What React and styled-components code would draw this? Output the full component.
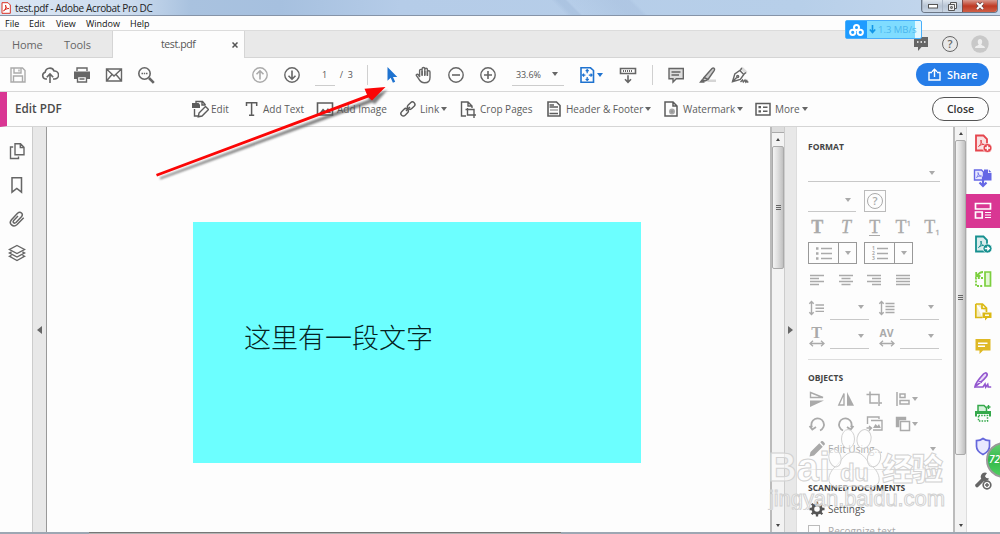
import React from "react";
import styled, { createGlobalStyle } from "styled-components";

const Svg = ({ w = 18, h = w, children }) => (
  <IconSvg width={w} height={h} viewBox={`0 0 ${w} ${h}`}>
    {children}
  </IconSvg>
);

const icons = {
  save: (
    <Svg>
      <path d="M2 2h11.5L16 4.5V16H2zM5 2v5h7V2M4.5 16v-6h9v6M10 3.5v2" />
    </Svg>
  ),
  cloud: (
    <Svg>
      <path d="M6 13H4.6A3.5 3.5 0 0 1 4.2 6.2 4.6 4.6 0 0 1 13 5a4 4 0 0 1 1 8h-2M9 17V8.5M5.8 11.3 9 8l3.2 3.3" strokeWidth="1.6" />
    </Svg>
  ),
  print: (
    <Svg>
      <path d="M4 5V2h10v3" />
      <path d="M1 5.5h16V13h-3v-3H4v3H1z" fill="currentColor" stroke="none" />
      <path d="M4.5 10.5h9v5.5h-9zM6.5 13h5" />
    </Svg>
  ),
  mail: (
    <Svg>
      <path d="M1.5 3h15v12h-15zM1.5 3 9 10l7.5-7M1.5 15l5.5-6.5M16.5 15 11 8.5" />
    </Svg>
  ),
  search: (
    <Svg>
      <circle cx="7.5" cy="7.5" r="5.7" strokeWidth="1.6" />
      <path d="m12 12 4.8 4.8" strokeWidth="2.6" />
      <path d="M4.5 7.5H6m.8 0h1.4m.8 0h1.5" strokeWidth="1.5" />
    </Svg>
  ),
  up: (
    <Svg>
      <circle cx="9" cy="9" r="7.2" />
      <path d="M9 13.5V5M5.5 8.3 9 4.8l3.5 3.5" strokeWidth="1.6" />
    </Svg>
  ),
  down: (
    <Svg>
      <circle cx="9" cy="9" r="7.2" />
      <path d="M9 4.5V13M5.5 9.7 9 13.2l3.5-3.5" strokeWidth="1.6" />
    </Svg>
  ),
  pointer: (
    <Svg>
      <path d="M4.5 1v13.8l3.2-3 2.2 5 2.3-1-2.2-4.8h4.3z" fill="currentColor" stroke="none" />
    </Svg>
  ),
  hand: (
    <Svg>
      <path d="M4.6 11V4.6c0-1.6 2.5-1.6 2.5 0V9 2.8c0-1.8 2.7-1.8 2.7 0V9 3.5c0-1.7 2.6-1.7 2.6 0V9.5 6c0-1.7 2.6-1.6 2.6 0v5.5c0 3-1.8 5.3-5.4 5.3-3.3 0-4.8-1.9-6.2-4.5L1.3 9.5c-.4-1 1.2-1.9 2.1-.8z" />
      <path d="M7.1 5v5M9.800 5v5M12.400 5v5" />
    </Svg>
  ),
  minus: (
    <Svg>
      <circle cx="9" cy="9" r="7.2" />
      <path d="M5 9h8" strokeWidth="1.6" />
    </Svg>
  ),
  plus: (
    <Svg>
      <circle cx="9" cy="9" r="7.2" />
      <path d="M5 9h8M9 5v8" strokeWidth="1.6" />
    </Svg>
  ),
  fit: (
    <Svg>
      <path d="M2 1.8h9.500L14.500 4.500v11.700H2z" strokeWidth="1.600" />
      <path d="M8.200 3.700v3.500M6.700 5.200l1.500-1.500 1.500 1.500M8.200 14.500V11M6.700 13l1.500 1.500L9.700 13M3.400 9.100h3M5 7.600 3.500 9.100 5 10.600M13.200 9.100h-3.400M11.600 7.600l1.500 1.500-1.500 1.500" strokeWidth="1.200" />
    </Svg>
  ),
  measure: (
    <Svg>
      <path d="M1.500 2.500h15v5h-15z" strokeWidth="1.600" />
      <path d="M9 9.300v7M6 13.300l3 3 3-3" strokeWidth="1.600" />
      <path d="M4 5h10" strokeDasharray="1 1" strokeWidth="2" />
    </Svg>
  ),
  comment: (
    <Svg>
      <path d="M2 2.500h14.300v10.300h-7L6 16v-3.200H2z" fill="#ddd" />
      <path d="M4.500 6h9M4.500 9h7.500" />
    </Svg>
  ),
  marker: (
    <Svg>
      <path d="M8 16h9v-2.500H10z" fill="#d5d5d5" stroke="none" />
      <path d="m5 11.500 8-9c1.500-1.400 3.300.1 2.300 1.800L9 13.500zM5 11.500l-1 1.500v1.500l2.800.3L9 13.500M3.500 13.500 1.500 16h4" fill="#ccc" />
    </Svg>
  ),
  sign: (
    <Svg>
      <path d="M9 2.500 11.500.8l5 5-1.800 2.500z" fill="#ddd" stroke="none" />
      <path d="M1.500 15.700 3.800 8l5-3.500 4 4-3.500 5zM9 5l1.800-3.200M12.500 8.500l2.500-2M1.700 15.500l4-4" />
      <circle cx="6.700" cy="10.500" r="1" />
      <path d="M9.500 16l2-2 .8 2 1.700-2 .8 2 1-1.300.6 1.300h1" />
    </Svg>
  ),
  editPdf: (
    <Svg>
      <path d="M5 3.500V1.500h6.500L14.500 5M3.500 9v7H8M11 1.500V5h3.500" />
      <path d="M1 3h6.500l1.500 1.500V8H1z" fill="currentColor" stroke="none" />
      <path d="m8 13 6.500-6.500 3 3-6.500 6.500-3.700.8z" fill="#fdfdfd" />
    </Svg>
  ),
  text: (
    <Svg>
      <path d="M4.500 6V2.800h10.200V6M9.600 3v12.500M7 15.300h5.200" strokeWidth="1.500" />
    </Svg>
  ),
  image: (
    <Svg>
      <path d="M1.500 3h15v12h-15z" strokeWidth="1.600" />
      <path d="m3.500 13 3.500-4.500 2.500 2.500 2.500-3 3 5z" fill="currentColor" stroke="none" />
    </Svg>
  ),
  link: (
    <Svg>
      <rect x="-4.200" y="-2.500" width="8.400" height="5" rx="2.500" transform="translate(5.600 12.200) rotate(-45)" />
      <rect x="-4.200" y="-2.500" width="8.400" height="5" rx="2.500" transform="translate(12.200 5.600) rotate(-45)" />
      <path d="m7 11 4-4" />
    </Svg>
  ),
  cropPages: (
    <Svg>
      <path d="M7 16H2.500V2H9l4 4v2M9 2v4h4M8.500 8v7H17M6.500 9.500H15V18" />
    </Svg>
  ),
  header: (
    <Svg>
      <path d="M3 2h8.500L15 5.500V16H3z" strokeWidth="1.600" />
      <path d="M4.500 5H9M4.500 7h8.500M4.500 13.500H13" />
      <path d="M5 10h8" stroke="#bbb" strokeWidth="2" />
    </Svg>
  ),
  watermark: (
    <Svg>
      <path d="M3 2h8l4 4v10H3zM11 2v4h4" strokeWidth="1.500" />
      <circle cx="10" cy="11.500" r="2.300" fill="#999" stroke="#aaa" />
    </Svg>
  ),
  more: (
    <Svg>
      <path d="M2 3.500h14v11.500H2z" strokeWidth="1.500" />
      <path d="M4.500 7.200H7M4.500 11.300H7" strokeWidth="2.300" />
      <path d="M9 7.200h4.500M9 11.300h4.500" strokeWidth="1.500" />
    </Svg>
  ),
  pages: (
    <Svg>
      <path d="M7 1.700h5.500L16 5.200v7.600H7zM12.300 1.700v3.800H16M5.200 5H2.500v11.500h8v-2" />
    </Svg>
  ),
  bookmark: (
    <Svg>
      <path d="M4 1.700h9.500v14.500L8.800 12.500 4 16.200z" strokeWidth="1.500" />
    </Svg>
  ),
  clip: (
    <Svg>
      <path d="m15.700 7.700-6.600 6.800c-3.900 3.500-9-.8-5.600-4.800l6-6.400c3-2.600 6.300.6 3.900 3.500l-5.400 5.700c-1.900 1.500-3.700-.3-2.300-2.100L10 6" strokeWidth="1.500" />
    </Svg>
  ),
  layers: (
    <Svg>
      <path d="m9 1.500 7.500 4-7.500 4-7.500-4zM3.500 8l-2 1L9 13l7.500-4-2-1M3.500 11.300l-2 1L9 16.500l7.500-4.200-2-1" />
    </Svg>
  ),
  alignLeft: <Svg><path d="M2 4.500h14M2 7.500h9M2 10.500h14M2 13.500h9" /></Svg>,
  alignCenter: <Svg><path d="M2 4.500h14M4.500 7.500h9M2 10.500h14M4.500 13.500h9" /></Svg>,
  alignRight: <Svg><path d="M2 4.500h14M7 7.500h9M2 10.500h14M7 13.500h9" /></Svg>,
  justify: <Svg><path d="M2 4.500h14M2 7.500h14M2 10.500h14M2 13.500h14" /></Svg>,
  lineSpace: (
    <Svg>
      <path d="M3.500 3v12M1.300 4.800 3.500 2.500l2.200 2.300M1.300 13.200l2.200 2.300 2.200-2.300M7.500 6H16M7.500 9.200H16M7.500 12.400H16" />
    </Svg>
  ),
  paraSpace: (
    <Svg>
      <path d="M3.500 3v12M1.300 4.800 3.500 2.500l2.200 2.300M1.300 13.200l2.200 2.300 2.200-2.300M7.500 4.500H16.500M7.500 7.500H16.500M7.500 10.500H16.500M7.500 13.500H16.500" />
    </Svg>
  ),
  flipV: (
    <Svg>
      <path d="M2.500 2.500 15 7.500H2.500z" />
      <path d="M2 10.500h14L2 17z" fill="currentColor" stroke="none" />
    </Svg>
  ),
  flipH: (
    <Svg>
      <path d="M7 3.500V15H1.800z" />
      <path d="M10 2v13.700h7z" fill="currentColor" stroke="none" />
    </Svg>
  ),
  crop: (
    <Svg>
      <path d="M5 1.500V13h8M1.500 4.500H14V16M14.500 13H17" strokeWidth="1.500" />
    </Svg>
  ),
  alignObj: (
    <Svg>
      <path d="M3 2v14M6 4h5v3.500H6zM6 10.500h9V14H6z" strokeWidth="1.500" />
    </Svg>
  ),
  ccw: (
    <Svg>
      <path d="M4 12.500A6.300 6.300 0 1 1 12 15.500M1.500 11l2.800 3.500L8 12" strokeWidth="1.800" />
    </Svg>
  ),
  cw: (
    <Svg>
      <path d="M14 12.500A6.300 6.300 0 1 0 6 15.500M16.500 11l-2.800 3.500L10 12" strokeWidth="1.800" />
    </Svg>
  ),
  replace: (
    <Svg>
      <path d="M2.500 9V2H14v2M6 5.500h11V15H8M1.500 13H6M4 11l2.500 2L4 15.500" />
      <path d="m8 13 2.500-4 2 2 1.500-2 1.800 4z" fill="currentColor" stroke="none" />
    </Svg>
  ),
  arrange: (
    <Svg>
      <path d="M2.500 11.500v-9h9v2H4.700v7z" fill="currentColor" />
      <path d="M6.500 6.500h9v9h-9z" strokeWidth="1.500" />
    </Svg>
  ),
  pencil: (
    <Svg>
      <path d="m1.500 16.500 1-4.500L11.300 3.200l3.500 3.500L6 15.500zM12.300 2.300l1.200-1.200c1-1 4.300 2.200 3.300 3.300l-1.200 1.300z" fill="currentColor" stroke="none" />
    </Svg>
  ),
  gear: (
    <Svg>
      <circle cx="9" cy="9" r="4.200" strokeWidth="2.800" />
      <path d="M9 1.500v3M9 13.500v3M1.500 9h3M13.500 9h3M3.700 3.700l2 2M12.300 12.300l2 2M14.300 3.700l-2 2M5.700 12.300l-2 2" strokeWidth="2.300" />
    </Svg>
  ),
};

const pdfPage = (
  <>
    <path d="M3 1.500h7.500l3.500 3.500v11.500H3z" fillOpacity=".15" fill="currentColor" strokeWidth="1.800" />
    <path d="M5.500 12.500C8 10.500 9 7.500 8 6c-.8 2.500 1.500 5 4 4.500-2.500-.5-5 .5-6.500 2z" strokeWidth="1" />
  </>
);

const railTools = [
  {
    color: "#e5454d",
    icon: (
      <Svg w={20}>
        {pdfPage}
        <circle cx="14.500" cy="14" r="4.500" fill="currentColor" stroke="#fff" strokeWidth=".7" />
        <path d="M12 14h5M14.500 11.500v5" stroke="#fff" strokeWidth="1.500" />
      </Svg>
    ),
  },
  {
    color: "#6567e5",
    icon: (
      <Svg w={20}>
        <path d="M1.500 2h7l2 2v8h-9z" fill="#e7e7ff" />
        <path d="M11 1.500h4V5h3.500v7.500H11z" fill="currentColor" stroke="none" />
        <path d="M15.800 1.500v2.700h2.700z" fill="currentColor" stroke="none" />
        <path d="M3.500 9.500c2-2 2-4 1.500-5 0 2 2 4 3.500 3.500-2 0-4 .5-5 1.500z" strokeWidth=".8" />
        <path d="M10 8.500v9M6.500 14.500 10 18l3.500-3.500" strokeWidth="2.200" />
      </Svg>
    ),
  },
  {
    active: true,
    color: "#fff",
    icon: (
      <Svg w={20}>
        <path d="M2.500 2.500h15v5.500h-15zM2.500 11h6.700v6H2.500z" strokeWidth="1.700" />
        <path d="M12 11.500h6M12 14h6M12 16.500h6" strokeWidth="1" />
      </Svg>
    ),
  },
  {
    color: "#17908f",
    icon: (
      <Svg w={20}>
        {pdfPage}
        <circle cx="14.500" cy="13.500" r="4.500" fill="currentColor" stroke="#fff" strokeWidth=".7" />
        <path d="M11.800 13.500h4.500m-2-2 2 2-2 2" stroke="#fff" strokeWidth="1.400" />
      </Svg>
    ),
  },
  {
    color: "#7ccf3f",
    icon: (
      <Svg w={20}>
        <path d="M12 3h5.500v14H12z" fill="#e2f7d5" strokeWidth="1.700" />
        <path d="M10 9H3v8h7" strokeDasharray="2 1.200" strokeWidth="1.800" />
        <path d="M10 3C7.500 3 6 4 4.200 6.500M3.200 3v4H7.500" strokeWidth="1.800" />
      </Svg>
    ),
  },
  {
    color: "#dbb914",
    icon: (
      <Svg w={20}>
        <path d="M2.800 2h6.700l4 4v4M9.500 15.500H2.800V2M9 2v4.500h4.500" fill="#f5edc0" strokeWidth="1.700" />
        <path d="M9.500 10.500h9V16h-4l-2.500 2.500V16H9.500z" fill="currentColor" stroke="none" />
        <path d="M12 13.200h4" stroke="#fff" />
      </Svg>
    ),
  },
  {
    color: "#dfb925",
    icon: (
      <Svg w={20}>
        <path d="M2.500 3h15v11.500H10L6.500 18v-3.500h-4z" fill="currentColor" stroke="none" />
        <path d="M5 7.300h9.500M5 10.300h7" stroke="#fff" />
      </Svg>
    ),
  },
  {
    color: "#9357cf",
    icon: (
      <Svg w={20}>
        <path d="M2 16.500c.4-3 2-5.500 8.500-12.500 2.500-2.500 5 0 2.700 2.800C9.500 11.500 6.500 13.500 2 16.500zM5.500 10.500 9 12.500" fill="#eadcf8" strokeWidth="1.700" />
        <path d="M2 17h8l2-3 .7 3 2-2.500.5 2.500h3" strokeWidth="1.700" />
      </Svg>
    ),
  },
  {
    color: "#35a94b",
    icon: (
      <Svg w={20}>
        <path d="M5 8V2.500h6l2.500 2.500v3" fill="#d6f2db" strokeWidth="1.500" />
        <path d="M2 8h16v5.500h-2V11H4v2.500H2z" fill="currentColor" stroke="none" />
        <path d="M5.500 12.500h9V18h-9z" strokeDasharray="1.500 1.200" strokeWidth="1.500" />
        <path d="M15.500 2v4m-2-2h4" />
      </Svg>
    ),
  },
  {
    color: "#6567dc",
    icon: (
      <Svg w={20}>
        <path d="M10 1.500c2 1.700 4 2.200 6.500 2.200v5.500c0 4-2.500 6.300-6.500 8.300-4-2-6.500-4.300-6.500-8.300V3.700c2.500 0 4.500-.5 6.500-2.200z" fill="#e8e8ff" strokeWidth="1.700" />
      </Svg>
    ),
  },
  {
    color: "#666",
    icon: (
      <Svg w={20}>
        <path d="m4 14.500 7-7" strokeWidth="3.700" strokeLinecap="round" />
        <path d="M14 2a4.300 4.300 0 1 0 2 5.500L12.700 6.800 12 5z" fill="currentColor" stroke="none" />
        <circle cx="14" cy="14" r="3.800" fill="#fff" strokeWidth="1.700" />
        <path d="M12 14h4M14 12v4" strokeWidth="1.500" />
      </Svg>
    ),
  },
];

const editTools = [
  { icon: "editPdf", label: "Edit", width: 51, gap: 2 },
  { icon: "text", label: "Add Text", width: 74, gap: 3 },
  { icon: "image", label: "Add Image", width: 83, gap: 3 },
  { icon: "link", label: "Link", width: 60, gap: 3, menu: true },
  { icon: "cropPages", label: "Crop Pages", width: 86, gap: 3 },
  { icon: "header", label: "Header & Footer", width: 117, gap: 3, menu: true },
  { icon: "watermark", label: "Watermark", width: 92, gap: 3, menu: true },
  { icon: "more", label: "More", width: 60, gap: 3, menu: true },
];

const Grip = () => (
  <GripBox>
    <i />
    <i />
    <i />
  </GripBox>
);

const Spacing = ({ children }) => (
  <SpacingBox>
    {children}
    <Field $w={39} $h={24}>
      <Caret />
    </Field>
  </SpacingBox>
);

const WidthArrow = () => (
  <svg width="16" height="7">
    <path d="M1 3.500h14M4 .8 1 3.500l3 2.700M12 .8l3 2.700-3 2.700" fill="none" stroke="#aaa" strokeWidth="1.300" />
  </svg>
);

const App = () => {
  return (
    <Window>
      <GlobalStyle />
      <TitleBar>
        <AppIcon>
          <svg width="10" height="12" viewBox="0 0 10 12" fill="none" stroke="#d93025">
            <path d="M1 .7h6L9.300 3v8.300H1z" fill="#fff" />
            <path d="M2.500 9C5 7 5.500 4.500 4.500 3c-.5 2 1.500 4 3.500 3.500C6 6.500 4 7.500 2.500 9z" />
          </svg>
        </AppIcon>
        <TitleText>test.pdf - Adobe Acrobat Pro DC</TitleText>
        <WindowButtons>
          <WindowButton $w={20}>
            <svg width="10" height="5"><rect x=".5" y=".5" width="9" height="3.500" fill="#fff" stroke="#555" /></svg>
          </WindowButton>
          <WindowButton $w={20}>
            <svg width="9" height="9" fill="#eee" stroke="#555"><path d="M2.500.5h6v6h-6z" /><path d="M.5 2.500h6v6h-6z" /><path d="M2.700 4.700h1.600v1.600H2.700z" /></svg>
          </WindowButton>
          <WindowButton $w={35} $close>
            <svg width="10" height="8"><path d="m2 1 6 6M8 1 2 7" stroke="#644" strokeWidth="3.400" /><path d="m2 1 6 6M8 1 2 7" stroke="#fff" strokeWidth="2" /></svg>
          </WindowButton>
        </WindowButtons>
      </TitleBar>

      <MenuBar>
        <MenuItem $w={24}>File</MenuItem>
        <MenuItem $w={27}>Edit</MenuItem>
        <MenuItem $w={30}>View</MenuItem>
        <MenuItem $w={44}>Window</MenuItem>
        <MenuItem $w={30}>Help</MenuItem>
      </MenuBar>

      <TabBar>
        <TabLink $w={52}>Home</TabLink>
        <TabLink $w={48}>Tools</TabLink>
        <ActiveTab>
          <TabTitle>test.pdf</TabTitle>
          <svg width="6" height="6"><path d="m.5.5 5 5m0-5-5 5" stroke="#555" strokeWidth="1.500" /></svg>
        </ActiveTab>
        <TabActions>
          <svg width="16" height="16"><path d="M1 1h14v10H8.500L5 15v-4H1z" fill="#666" /><path d="M4 6h1.500m2 0H9m2 0h1.500" stroke="#fff" strokeWidth="1.500" /></svg>
          <HelpMark>?</HelpMark>
          <svg width="18" height="18"><circle cx="9" cy="9" r="8.700" fill="#c8c8c8" /><path d="M9 4c3 0 2.500 4.500 1.200 5.500 0 1 3.800 1 3.800 3.500H4c0-2.500 3.800-2.500 3.800-3.500C6.500 8.500 6 4 9 4z" fill="#eee" /></svg>
        </TabActions>
      </TabBar>

      <Toolbar>
        <Tools $left={2}>
          <Tool $faded>{icons.save}</Tool>
          <Tool>{icons.cloud}</Tool>
          <Tool>{icons.print}</Tool>
          <Tool>{icons.mail}</Tool>
          <Tool>{icons.search}</Tool>
        </Tools>
        <Tools $left={81}>
          <Tool $faded>{icons.up}</Tool>
          <Tool>{icons.down}</Tool>
        </Tools>
        <PageField>1</PageField>
        <PageCount>/&nbsp; 3</PageCount>
        <Separator />
        <Tools $left={8}>
          <Tool $blue>{icons.pointer}</Tool>
          <Tool>{icons.hand}</Tool>
          <Tool>{icons.minus}</Tool>
          <Tool>{icons.plus}</Tool>
        </Tools>
        <ZoomField>
          33.6%
          <Caret $dark />
        </ZoomField>
        <FitTool>
          {icons.fit}
          <Caret $blue />
        </FitTool>
        <Tool>{icons.measure}</Tool>
        <Separator $left={8} />
        <Tools $left={7}>
          <Tool>{icons.comment}</Tool>
          <Tool>{icons.marker}</Tool>
          <Tool>{icons.sign}</Tool>
        </Tools>
        <ShareButton>
          <svg width="13" height="13" fill="none" stroke="#fff" strokeWidth="1.400"><path d="M4 4.500H1v7.500h11V4.500H9M6.500 9V1.500M4 3.700l2.500-2.500L9 3.700" /></svg>
          Share
        </ShareButton>
      </Toolbar>

      <EditBar>
        <EditTitle>Edit PDF</EditTitle>
        {editTools.map((tool) => (
          <EditTool key={tool.label} $w={tool.width} $gap={tool.gap}>
            {icons[tool.icon]}
            <span>{tool.label}</span>
            {tool.menu && <Caret $dark />}
          </EditTool>
        ))}
        <CloseButton>Close</CloseButton>
      </EditBar>

      <Body>
        <LeftRail>
          {icons.pages}
          {icons.bookmark}
          {icons.clip}
          {icons.layers}
        </LeftRail>
        <Splitter $w={15}>
          <svg width="5" height="8"><path d="M5 0v8L0 4z" fill="#666" /></svg>
        </Splitter>
        <Document>
          <Slide>这里有一段文字</Slide>
        </Document>
        <ScrollBar $w={14}>
          <SplitBox />
          <ScrollArrow $h={13}><ArrowUp /></ScrollArrow>
          <Thumb $h={123}><Grip /></Thumb>
          <ScrollEnd><ArrowDown /></ScrollEnd>
        </ScrollBar>
        <Splitter $w={13} $right>
          <svg width="5" height="8"><path d="M0 0v8l5-4z" fill="#666" /></svg>
        </Splitter>
        <FormatPanel>
          <PanelTitle $h={40}>FORMAT</PanelTitle>
          <Field $w={132} $h={15}>
            <Caret />
          </Field>
          <FontRow>
            <Field $w={48} $h={21}>
              <Caret />
            </Field>
            <HelpBox><HelpMark $faded>?</HelpMark></HelpBox>
          </FontRow>
          <StyleRow>
            <Glyph $bold>T</Glyph>
            <Glyph $italic>T</Glyph>
            <Glyph $underline>T</Glyph>
            <Glyph>T<sup>1</sup></Glyph>
            <Glyph>T<sub>1</sub></Glyph>
          </StyleRow>
          <ListRow>
            <ListBox>
              <svg width="16" height="14" stroke="#aaa" strokeWidth="1.300"><path d="M5 2.500h11M5 7.500h11M5 12.500h11" /><path d="M0 2.500h2.500M0 7.500h2.500M0 12.500h2.500" strokeWidth="2.500" /></svg>
              <ListCaret><Caret /></ListCaret>
            </ListBox>
            <ListBox>
              <Numbers><span>1</span><span>2</span><span>3</span></Numbers>
              <svg width="11" height="14" stroke="#aaa" strokeWidth="1.300"><path d="M0 2.500h11M0 7.500h11M0 12.500h11" /></svg>
              <ListCaret><Caret /></ListCaret>
            </ListBox>
          </ListRow>
          <IconRow $h={32}>
            {icons.alignLeft}
            {icons.alignCenter}
            {icons.alignRight}
            {icons.justify}
          </IconRow>
          <SpacingRow $h={29}>
            <Spacing>{icons.lineSpace}</Spacing>
            <Spacing>{icons.paraSpace}</Spacing>
          </SpacingRow>
          <SpacingRow $h={29}>
            <Spacing>
              <WidthGlyph $serif>T<WidthArrow /></WidthGlyph>
            </Spacing>
            <Spacing>
              <WidthGlyph>AV<WidthArrow /></WidthGlyph>
            </Spacing>
          </SpacingRow>
          <Rule $top={5} />
          <PanelTitle $h={30} $top={6}>OBJECTS</PanelTitle>
          <IconRow $h={18}>
            {icons.flipV}
            {icons.flipH}
            {icons.crop}
            {icons.alignObj}
            <Caret />
          </IconRow>
          <IconRow $h={32}>
            {icons.ccw}
            {icons.cw}
            {icons.replace}
            {icons.arrange}
            <Caret />
          </IconRow>
          <PanelLine $h={18} $faded>
            {icons.pencil}
            <span>Edit Using...</span>
            <Caret />
          </PanelLine>
          <Rule $top={11} />
          <PanelTitle $h={28} $top={8}>SCANNED DOCUMENTS</PanelTitle>
          <PanelLine $h={22}>
            {icons.gear}
            <span>Settings</span>
          </PanelLine>
          <CheckLine>
            <CheckBox />
            <span>Recognize text</span>
          </CheckLine>
        </FormatPanel>
        <ScrollBar $w={13}>
          <ScrollArrow $h={13}><ArrowUp /></ScrollArrow>
          <Thumb $h={315}><Grip /></Thumb>
          <ScrollEnd><ArrowDown /></ScrollEnd>
        </ScrollBar>
        <RightRail>
          {railTools.map((tool, i) => (
            <RailTool key={i} $color={tool.color} $active={tool.active}>
              {tool.icon}
            </RailTool>
          ))}
        </RightRail>
      </Body>
      <Taskbar />

      {/* things floating over the window */}
      <Speed>
        <SpeedIcon>
          <svg width="15" height="12" fill="none" stroke="#fff" strokeWidth="2"><circle cx="7.500" cy="3.500" r="2.500" /><circle cx="3.700" cy="8.300" r="2.600" /><circle cx="11.300" cy="8.300" r="2.600" /></svg>
        </SpeedIcon>
        <svg width="7" height="9"><path d="M3.500 0v7M.8 4.500l2.700 3 2.700-3" fill="none" stroke="#1196e8" strokeWidth="1.600" /></svg>
        <span>1.3 MB/s</span>
      </Speed>
      <Arrow width="250" height="110" viewBox="0 0 250 110">
        <path d="m7 94.500 209-78-1-2.500 19.500-7L222 21l-3-1.500L7 96.500z" transform="translate(3 3)" fill="#555" opacity=".75" filter="url(#soft)" />
        <path d="m6 94 211-79.300-2.500-6L235.500 7 222 20.500l-3.500-3L7 96.500z" fill="#fb0606" />
        <filter id="soft"><feGaussianBlur stdDeviation="1.300" /></filter>
      </Arrow>
      <Ball>72</Ball>
      <Watermark width="190" height="90" viewBox="0 0 190 90">
        <g fill="#fff" fillOpacity=".55" stroke="#d2d2d2" strokeWidth="1">
          <text x="5" y="61" fontFamily="Liberation Sans" fontWeight="700" fontSize="40" textLength="62" lengthAdjust="spacingAndGlyphs">Bai</text>
          <path d="M91 32c10 0 12 9 19 15s10 19-2 20c-7 1-10-1-17-1s-10 2-17 1c-12-1-9-14-2-20s9-15 19-15z" />
          <ellipse cx="72" cy="38" rx="6" ry="9" transform="rotate(-12 72 38)" />
          <ellipse cx="85" cy="19" rx="6.500" ry="9.500" />
          <ellipse cx="101" cy="19" rx="7" ry="9.500" transform="rotate(12 101 19)" />
          <ellipse cx="111" cy="38" rx="6.500" ry="9" transform="rotate(15 111 38)" />
          <text x="77" y="61" fontFamily="Liberation Sans" fontWeight="700" fontSize="24" textLength="29">du</text>
          <text x="119" y="60" fontFamily="Noto Sans CJK SC" fontWeight="900" fontSize="31" textLength="61">经验</text>
          <text x="6" y="86" fontFamily="Liberation Sans" fontSize="22" textLength="176">jingyan.baidu.com</text>
        </g>
      </Watermark>
    </Window>
  );
};

const GlobalStyle = createGlobalStyle`
  * {
    box-sizing: border-box;
  }
  body {
    margin: 0;
    overflow: hidden;
  }
  svg {
    flex: none;
    display: block;
  }
`;

const Window = styled.div`
  position: relative;
  width: 1000px;
  height: 534px;
  overflow: hidden;
  display: flex;
  flex-direction: column;
  background: #fdfdfd;
  color: #555;
  font-family: "Open Sans", "Noto Sans", sans-serif;
  font-size: 10px;
  line-height: 1;
  white-space: nowrap;
`;

const IconSvg = styled.svg`
  fill: none;
  stroke: currentColor;
  stroke-width: 1.4;
`;

const TitleBar = styled.div`
  height: 16px;
  flex: none;
  display: flex;
  align-items: center;
  padding-left: 1px;
  border-bottom: 1px solid #8694a8;
  background: linear-gradient(45deg, transparent 400px, #a3bcdb88 405px 410px, transparent 412px, #a9c1df88 445px 455px, transparent 458px),
    linear-gradient(90deg, #dbe7f4 0, #cbdbee 130px, #a9c2df 190px, #a6c0df 280px, #b5cce8 400px, #b7cfe9 800px, #c7d9ee 100%);
`;

const AppIcon = styled.div`
  width: 14px;
`;

const TitleText = styled.div`
  color: #222;
  font-size: 10px;
  letter-spacing: -0.35px;
`;

const WindowButtons = styled.div`
  display: flex;
  align-self: flex-start;
  margin-left: auto;
  margin-right: 2px;
  border: 1px solid #6c7787;
  border-top: 0;
  border-radius: 0 0 4px 4px;
  overflow: hidden;
`;

const WindowButton = styled.div`
  width: ${({ $w }) => $w}px;
  height: 12px;
  display: flex;
  align-items: center;
  justify-content: center;
  border-left: ${({ $close }) => ($close ? "1px solid #7c4a48" : "1px solid #aab6c5")};
  background: ${({ $close }) =>
    $close ? "linear-gradient(#d8998e, #bf3a24 50%, #cf6048)" : "linear-gradient(#dde5ee, #b8c5d5 50%, #cad6e4)"};
`;

const MenuBar = styled.div`
  height: 15px;
  flex: none;
  display: flex;
  align-items: center;
  padding-left: 5px;
  color: #111;
  font-size: 9px;
  border-bottom: 1px solid #dcdcdc;
`;

const MenuItem = styled.div`
  width: ${({ $w }) => $w}px;
`;

const TabBar = styled.div`
  height: 27px;
  flex: none;
  display: flex;
  align-items: stretch;
  padding-left: 12px;
  background: #e9e9e9;
  border-bottom: 1px solid #d5d5d5;
`;

const TabLink = styled.div`
  width: ${({ $w }) => $w}px;
  line-height: 27px;
  font-size: 11px;
  letter-spacing: -0.1px;
  color: #666;
`;

const ActiveTab = styled.div`
  width: 133px;
  height: 27px;
  padding: 0 6px 0 48px;
  display: flex;
  align-items: center;
  justify-content: space-between;
  border: 1px solid #d5d5d5;
  border-width: 0 1px;
  background: #fdfdfd;
`;

const TabTitle = styled.div`
  font-size: 10.5px;
  letter-spacing: -0.4px;
`;

const TabActions = styled.div`
  display: flex;
  align-items: center;
  gap: 13px;
  margin-left: auto;
  padding-right: 11px;
`;

const HelpMark = styled.div`
  width: 16px;
  height: 16px;
  border: 1.5px solid ${({ $faded }) => ($faded ? "#aaa" : "#666")};
  border-radius: 50%;
  color: ${({ $faded }) => ($faded ? "#aaa" : "#666")};
  font-size: 11px;
  font-weight: 600;
  line-height: 13px;
  text-align: center;
`;

const Toolbar = styled.div`
  height: 34px;
  flex: none;
  display: flex;
  align-items: center;
  border-bottom: 1px solid #d8d8d8;
`;

const Tools = styled.div`
  display: flex;
  margin-left: ${({ $left }) => $left}px;
`;

const Tool = styled.div`
  width: 32.1px;
  display: flex;
  justify-content: center;
  color: ${({ $faded, $blue }) => ($faded ? "#aaa" : $blue ? "#1f73d0" : "#666")};
`;

const PageField = styled.div`
  width: 20px;
  height: 20px;
  margin: 2px 0 0 7px;
  line-height: 17px;
  text-align: center;
  font-size: 9px;
  border-bottom: 1px solid #ccc;
`;

const PageCount = styled.div`
  width: 28px;
  padding-left: 5px;
  font-size: 9px;
`;

const Separator = styled.div`
  width: 1px;
  height: 20px;
  margin-left: ${({ $left = 4 }) => $left}px;
  background: #d0d0d0;
`;

const ZoomField = styled.div`
  width: 52px;
  height: 20px;
  margin: 2px 15px 0 8px;
  padding: 0 6px 2px 4px;
  display: flex;
  align-items: center;
  justify-content: space-between;
  font-size: 9px;
  letter-spacing: -0.1px;
  border-bottom: 1px solid #ccc;
`;

const Caret = styled.i`
  flex: none;
  width: 0;
  height: 0;
  border: 3px solid transparent;
  border-bottom: 0;
  border-top: 4px solid ${({ $dark, $blue }) => ($blue ? "#1f73d0" : $dark ? "#666" : "#aaa")};
`;

const FitTool = styled.div`
  width: 33px;
  display: flex;
  align-items: center;
  color: #1f73d0;
`;

const ShareButton = styled.div`
  width: 73px;
  height: 23px;
  margin: 0 11px 0 auto;
  padding-left: 12px;
  display: flex;
  align-items: center;
  gap: 6px;
  border-radius: 12px;
  background: #267de8;
  color: #fff;
  font-size: 11px;
  font-weight: 600;
`;

const EditBar = styled.div`
  height: 35px;
  flex: none;
  display: flex;
  align-items: center;
  border-left: 7px solid #d93693;
  border-bottom: 1px solid #d5d5d5;
`;

const EditTitle = styled.div`
  width: 184px;
  padding-left: 8px;
  font-size: 11.7px;
  font-weight: 600;
  color: #4a4a4a;
`;

const EditTool = styled.div`
  width: ${({ $w }) => $w}px;
  display: flex;
  align-items: center;
  gap: ${({ $gap }) => $gap}px;
  color: #5c5c5c;

  ${Caret} {
    margin-left: -1px;
  }
`;

const CloseButton = styled.div`
  width: 57px;
  height: 24px;
  margin: 0 11px 0 auto;
  border: 1px solid #555;
  border-radius: 12px;
  color: #333;
  font-size: 10.5px;
  font-weight: 600;
  line-height: 22px;
  text-align: center;
`;

const Body = styled.div`
  height: 405px;
  flex: none;
  display: flex;
  overflow: hidden;
`;

const LeftRail = styled.div`
  width: 32px;
  flex: none;
  display: flex;
  flex-direction: column;
  gap: 16px;
  padding: 15px 0 0 8px;
  color: #666;
`;

const Splitter = styled.div`
  width: ${({ $w }) => $w}px;
  flex: none;
  display: flex;
  align-items: center;
  justify-content: center;
  background: #e8e8e8;
  border: 1px solid #ccc;
  border-width: 0 1px;
  border-right: ${({ $right }) => ($right ? "1px solid #ddd" : "1px solid #999")};
`;

const Document = styled.div`
  flex: 1;
  padding: 95px 0 0 146px;
`;

const Slide = styled.div`
  width: 448px;
  height: 241px;
  padding: 100px 0 0 51px;
  background: #6cffff;
  color: #052222;
  font-family: "Noto Sans CJK SC", sans-serif;
  font-size: 27px;
  font-weight: 300;
  line-height: 30px;
`;

const ScrollBar = styled.div`
  width: ${({ $w }) => $w}px;
  flex: none;
  display: flex;
  flex-direction: column;
  align-items: stretch;
  background: #f3f3f3;
  border-left: 2px solid #bbb;
`;

const SplitBox = styled.div`
  height: 6px;
  background: #ddd;
  border-bottom: 1px solid #aaa;
`;

const ScrollArrow = styled.div`
  height: ${({ $h }) => $h}px;
  flex: none;
  display: flex;
  align-items: center;
  justify-content: center;
`;

const ArrowUp = styled.i`
  border: 2.5px solid transparent;
  border-top: 0;
  border-bottom: 3px solid #444;
`;

const ArrowDown = styled.i`
  border: 2.5px solid transparent;
  border-bottom: 0;
  border-top: 3px solid #444;
`;

const Thumb = styled.div`
  height: ${({ $h }) => $h}px;
  flex: none;
  display: flex;
  align-items: center;
  justify-content: center;
  border: 1px solid #aaa;
  border-radius: 2px;
  background: linear-gradient(90deg, #f4f4f4, #ddd 50%, #c0c0c0);
`;

const GripBox = styled.div`
  display: grid;
  gap: 1px;

  i {
    width: 5px;
    height: 1px;
    background: #666;
  }
`;

const ScrollEnd = styled.div`
  margin-top: auto;
  height: 13px;
  display: flex;
  align-items: center;
  justify-content: center;
`;

const FormatPanel = styled.div`
  width: 156px;
  flex: none;
  padding-left: 11px;
  color: #aaa;
`;

const PanelTitle = styled.div`
  height: ${({ $h }) => $h}px;
  padding-top: ${({ $top = 0 }) => $top}px;
  display: flex;
  align-items: center;
  font-size: 8.5px;
  font-weight: 700;
  color: #444;
`;

const Field = styled.div`
  width: ${({ $w }) => $w}px;
  height: ${({ $h }) => $h}px;
  padding: 0 5px 2px 0;
  display: flex;
  align-items: center;
  justify-content: flex-end;
  border-bottom: 1px solid #c8c8c8;
`;

const FontRow = styled.div`
  height: 30px;
  display: flex;
  align-items: flex-end;
  gap: 8px;
`;

const HelpBox = styled.div`
  width: 22px;
  height: 22px;
  display: flex;
  align-items: center;
  justify-content: center;
  border: 1px solid #bbb;
`;

const StyleRow = styled.div`
  height: 30px;
  display: grid;
  grid-template-columns: repeat(5, 28.7px);
  align-items: center;
  margin-left: -5px;
`;

const Glyph = styled.div`
  justify-self: center;
  height: 18px;
  font-family: "Liberation Serif", serif;
  font-size: 18px;
  font-weight: ${({ $bold }) => ($bold ? 700 : 400)};
  font-style: ${({ $italic }) => ($italic ? "italic" : "normal")};
  line-height: 18px;
  -webkit-text-stroke: 0.3px #aaa;
  border-bottom: ${({ $underline }) => ($underline ? "1px solid #aaa" : "0")};

  sup,
  sub {
    font-family: "Open Sans", sans-serif;
    font-size: 8px;
    line-height: 0;
  }

  sub {
    vertical-align: -2px;
  }
`;

const ListRow = styled.div`
  display: flex;
  gap: 7px;
`;

const ListBox = styled.div`
  width: 49px;
  height: 22px;
  padding-left: 7px;
  display: flex;
  align-items: center;
  border: 1px solid #999;
`;

const ListCaret = styled.div`
  width: 18px;
  height: 20px;
  margin-left: auto;
  display: flex;
  align-items: center;
  justify-content: center;
  border-left: 1px solid #999;
`;

const Numbers = styled.div`
  width: 5px;
  display: grid;
  font-size: 5px;
  font-weight: 700;
`;

const IconRow = styled.div`
  height: ${({ $h }) => $h}px;
  display: flex;
  align-items: center;
  gap: 10.7px;

  ${Caret} {
    margin-left: -11px;
  }
`;

const SpacingRow = styled.div`
  height: ${({ $h }) => $h}px;
  display: flex;
  gap: 9px;
`;

const SpacingBox = styled.div`
  width: 61px;
  height: 24px;
  display: flex;
  align-items: center;
  justify-content: space-between;
`;

const WidthGlyph = styled.div`
  width: 17px;
  height: 20px;
  display: flex;
  flex-direction: column;
  align-items: center;
  justify-content: space-between;
  font-family: ${({ $serif }) => ($serif ? '"Liberation Serif", serif' : '"Open Sans", sans-serif')};
  font-size: ${({ $serif }) => ($serif ? 16 : 10.5)}px;
  font-weight: 700;
  line-height: 12px;
`;

const Rule = styled.div`
  width: 134px;
  height: 1px;
  margin-top: ${({ $top }) => $top}px;
  background: #ddd;
`;

const PanelLine = styled.div`
  height: ${({ $h }) => $h}px;
  display: flex;
  align-items: center;
  gap: 2px;
  color: ${({ $faded }) => ($faded ? "#aaa" : "#555")};

  ${Caret} {
    margin: 0 17px 0 auto;
  }
`;

const CheckLine = styled.div`
  display: flex;
  align-items: center;
  gap: 8px;
  margin-top: 5px;
`;

const CheckBox = styled.div`
  width: 12px;
  height: 12px;
  border: 1px solid #bbb;
`;

const RightRail = styled.div`
  width: 34px;
  flex: none;
  border-left: 1px solid #ddd;
`;

const RailTool = styled.div`
  height: 33.7px;
  display: flex;
  align-items: center;
  justify-content: center;
  margin-left: -1px;
  color: ${({ $color }) => $color};
  background: ${({ $active }) => ($active ? "#d93693" : "transparent")};
`;

const Taskbar = styled.div`
  height: 2px;
  flex: none;
  background: linear-gradient(#777 1px, #b4b4b4 1px) 89px 0 / 472px 2px no-repeat, #9da7b3;
`;

const Speed = styled.div`
  position: absolute;
  left: 845px;
  top: 20px;
  width: 77px;
  height: 19px;
  display: flex;
  align-items: center;
  gap: 2px;
  border: 1px solid #48aefa;
  border-radius: 2px;
  background: linear-gradient(90deg, #7fdcff 69px, #e4f8ff 69px);
  color: #4ab6ee;
  font-size: 9.5px;
`;

const SpeedIcon = styled.div`
  width: 21px;
  height: 17px;
  display: flex;
  align-items: center;
  justify-content: center;
  background: #1e9bff;
`;

const Arrow = styled.svg`
  position: absolute;
  left: 150px;
  top: 80px;
`;

const Ball = styled.div`
  position: absolute;
  left: 986px;
  top: 442px;
  width: 36px;
  height: 36px;
  padding-left: 1px;
  border: 2px solid #999;
  border-radius: 50%;
  background: linear-gradient(#63cf70, #33b84a 50%, #4fd05f);
  color: #fff;
  font-size: 10px;
  font-weight: 600;
  font-style: italic;
  line-height: 31px;
`;

const Watermark = styled.svg`
  position: absolute;
  left: 763px;
  top: 420px;
`;

export default App;
